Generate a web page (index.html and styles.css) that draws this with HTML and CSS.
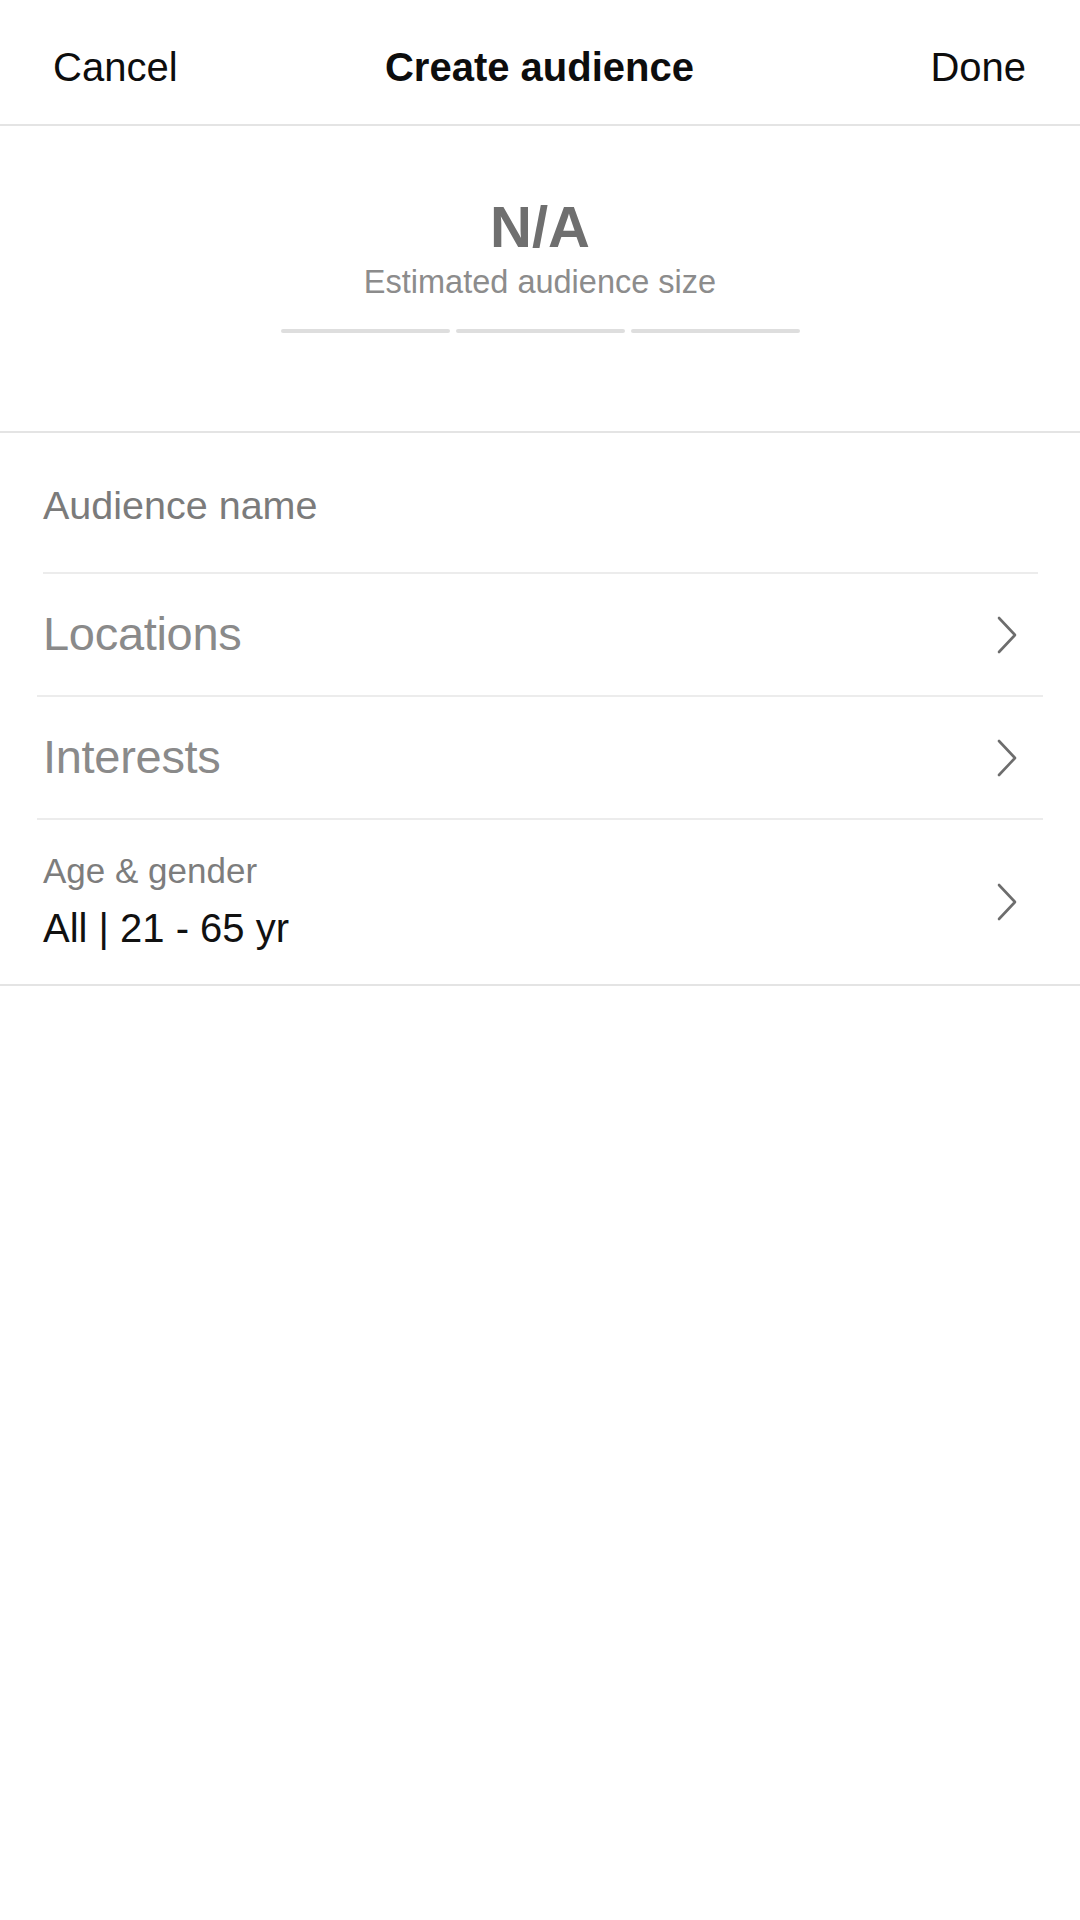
FILE: index.html
```html
<!DOCTYPE html>
<html lang="en">
<head>
<meta charset="utf-8">
<title>Create audience</title>
<link rel="stylesheet" href="styles.css">
</head>
<body>
<div class="app">
  <header class="topbar">
    <span class="topbar-btn topbar-left">Cancel</span>
    <span class="topbar-title">Create audience</span>
    <span class="topbar-btn topbar-right">Done</span>
  </header>

  <section class="summary">
    <div class="summary-value">N/A</div>
    <div class="summary-label">Estimated audience size</div>
    <div class="meter">
      <span class="meter-seg"></span>
      <span class="meter-seg"></span>
      <span class="meter-seg"></span>
    </div>
  </section>

  <section class="form">
    <div class="row row-name">
      <span class="placeholder">Audience name</span>
    </div>
    <div class="row row-nav">
      <span class="nav-label">Locations</span>
      <svg class="chevron" viewBox="0 0 20 38" width="20" height="38"><polyline points="2,2 18,19 2,36" fill="none" stroke="#6d6d6d" stroke-width="2.6" stroke-linecap="round" stroke-linejoin="round"/></svg>
    </div>
    <div class="row row-nav">
      <span class="nav-label">Interests</span>
      <svg class="chevron" viewBox="0 0 20 38" width="20" height="38"><polyline points="2,2 18,19 2,36" fill="none" stroke="#6d6d6d" stroke-width="2.6" stroke-linecap="round" stroke-linejoin="round"/></svg>
    </div>
    <div class="row row-age">
      <div class="age-text">
        <span class="age-label">Age &amp; gender</span>
        <span class="age-value">All | 21 - 65 yr</span>
      </div>
      <svg class="chevron" viewBox="0 0 20 38" width="20" height="38"><polyline points="2,2 18,19 2,36" fill="none" stroke="#6d6d6d" stroke-width="2.6" stroke-linecap="round" stroke-linejoin="round"/></svg>
    </div>
  </section>
</div>
</body>
</html>
```

FILE: styles.css
```css
* { box-sizing: border-box; }

html, body {
  margin: 0;
  padding: 0;
  background: #ffffff;
}

body {
  font-family: "Liberation Sans", Arial, Helvetica, sans-serif;
  color: #111111;
}

.app {
  width: 1080px;
  min-height: 1920px;
  background: #ffffff;
}

.topbar {
  height: 126px;
  display: grid;
  grid-template-columns: 1fr auto 1fr;
  align-items: center;
  padding: 10px 54px 0 53px;
  border-bottom: 2px solid #e4e4e4;
}

.topbar-btn {
  font-size: 40px;
  color: #0d0d0d;
}

.topbar-left { justify-self: start; }
.topbar-right { justify-self: end; }

.topbar-title {
  font-size: 40px;
  font-weight: 700;
  color: #0d0d0d;
}

.summary {
  display: flex;
  flex-direction: column;
  align-items: center;
  padding: 72px 0 98px;
  border-bottom: 2px solid #e4e4e4;
}

.summary-value {
  font-size: 58px;
  line-height: 58px;
  font-weight: 700;
  color: #6f6f6f;
}

.summary-label {
  margin-top: 9px;
  font-size: 32.5px;
  line-height: 34px;
  color: #8c8c8c;
}

.meter {
  margin-top: 30px;
  display: flex;
  gap: 6px;
}

.meter-seg {
  width: 169px;
  height: 4px;
  border-radius: 2px;
  background: #dedede;
}

.form {
  display: flex;
  flex-direction: column;
  border-bottom: 2px solid #e4e4e4;
}

.row {
  display: flex;
  align-items: center;
  justify-content: space-between;
}

.row-name {
  height: 141px;
  margin: 0 42px 0 43px;
  padding-top: 6px;
  border-bottom: 2px solid #ececec;
}

.placeholder {
  font-size: 39.5px;
  color: #7b7b7b;
}

.row-nav {
  height: 123px;
  margin: 0 37px;
  padding: 0 26px 0 6px;
  border-bottom: 2px solid #ececec;
}

.nav-label {
  font-size: 47px;
  color: #8a8a8a;
  letter-spacing: -0.3px;
  margin-top: -3px;
}

.row-age {
  height: 164px;
  margin: 0 37px;
  padding: 0 26px 0 6px;
}

.age-text {
  display: flex;
  flex-direction: column;
  gap: 15px;
  margin-top: -4px;
}

.age-label {
  font-size: 35px;
  line-height: 40px;
  color: #7d7d7d;
}

.age-value {
  font-size: 40px;
  line-height: 44px;
  color: #111111;
}

.chevron {
  display: block;
  flex-shrink: 0;
}
```
